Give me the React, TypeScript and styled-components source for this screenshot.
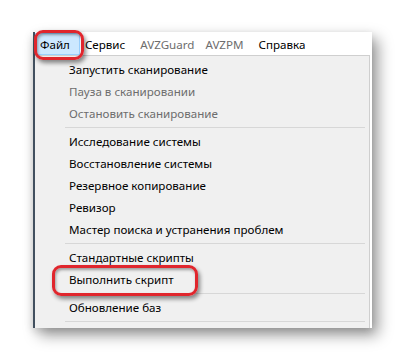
import React from "react";
import styled, { createGlobalStyle } from "styled-components";

const Global = createGlobalStyle`
  html, body { margin: 0; padding: 0; background: #ffffff; }
  body { font-family: "Noto Sans", "Open Sans", sans-serif; }
`;

const Page = styled.div`
  width: 403px;
  height: 362px;
  padding: 32px 0 0 33px;
  box-sizing: border-box;
  background: #ffffff;
`;

const Window = styled.div`
  width: 339px;
  background: #ffffff;
  border-left: 2px solid #42505f;
  box-sizing: border-box;
  box-shadow: 6px 7px 14px rgba(0, 0, 0, 0.4), -1px 3px 8px rgba(0, 0, 0, 0.12);
`;

const MenuBar = styled.div`
  display: flex;
  align-items: stretch;
  height: 23px;
`;

const BarItem = styled.div<{ $disabled?: boolean; $active?: boolean; $pad: number }>`
  position: relative;
  display: flex;
  align-items: center;
  padding: 0 ${(p) => p.$pad}px 0 4px;
  font-size: 11.6px;
  color: ${(p) => (p.$disabled ? "#6d6d6d" : "#000000")};
  background: ${(p) => (p.$active ? "#cce8ff" : "transparent")};
  border: 1px solid ${(p) => (p.$active ? "#99d1ff" : "transparent")};
  margin-top: 1px;
  box-sizing: border-box;
`;

const Dropdown = styled.div`
  width: 335px;
  background: #f0f0f0;
  border-top: 1px solid #cfcfcf;
  border-right: 1px solid #cfcfcf;
  padding: 2px 0 4px;
  box-sizing: border-box;
`;

const Item = styled.div<{ $disabled?: boolean }>`
  position: relative;
  height: 22px;
  display: flex;
  align-items: center;
  padding-left: 34px;
  font-size: 11.6px;
  color: ${(p) => (p.$disabled ? "#6d6d6d" : "#000000")};
  white-space: nowrap;
`;

const Separator = styled.div`
  height: 6px;
  display: flex;
  align-items: center;
  margin: 0 4px 0 30px;
  &::after {
    content: "";
    flex: 1;
    height: 1px;
    background: #d7d7d7;
  }
`;

const RedMark = styled.div<{ $l: number; $t: number; $w: number; $h: number }>`
  position: absolute;
  left: ${(p) => p.$l}px;
  top: ${(p) => p.$t}px;
  width: ${(p) => p.$w}px;
  height: ${(p) => p.$h}px;
  border: 3px solid #e0262d;
  border-radius: 9px;
  box-sizing: border-box;
  box-shadow: 2px 3px 4px rgba(0, 0, 0, 0.45), inset 1px 2px 3px rgba(0, 0, 0, 0.35);
  pointer-events: none;
`;

export default function App() {
  return (
    <>
      <Global />
      <Page>
        <Window>
          <MenuBar>
            <BarItem $active $pad={9}>
              Файл
              <RedMark $l={-2} $t={-4} $w={50} $h={30} />
            </BarItem>
            <BarItem $pad={9}>Сервис</BarItem>
            <BarItem $disabled $pad={5}>AVZGuard</BarItem>
            <BarItem $disabled $pad={9}>AVZPM</BarItem>
            <BarItem $pad={9}>Справка</BarItem>
          </MenuBar>
          <Dropdown>
            <Item>Запустить сканирование</Item>
            <Item $disabled>Пауза в сканировании</Item>
            <Item $disabled>Остановить сканирование</Item>
            <Separator />
            <Item>Исследование системы</Item>
            <Item>Восстановление системы</Item>
            <Item>Резервное копирование</Item>
            <Item>Ревизор</Item>
            <Item>Мастер поиска и устранения проблем</Item>
            <Separator />
            <Item>Стандартные скрипты</Item>
            <Item>
              Выполнить скрипт
              <RedMark $l={17} $t={-3} $w={146} $h={31} />
            </Item>
            <Separator />
            <Item>Обновление баз</Item>
            <Separator />
          </Dropdown>
        </Window>
      </Page>
    </>
  );
}
